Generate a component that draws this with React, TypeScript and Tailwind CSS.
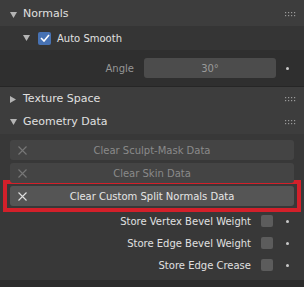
import { ReactNode } from 'react';

const font = { fontFamily: '"DejaVu Sans", "Liberation Sans", sans-serif' };

function Grip() {
  return (
    <svg width="11" height="5" viewBox="0 0 11 5" className="mr-[8px]">
      {[0, 3, 6, 9].map((x) => (
        <g key={x}>
          <rect x={x} y={0} width="1.2" height="1.2" fill="#9a9a9a" />
          <rect x={x} y={3} width="1.2" height="1.2" fill="#9a9a9a" />
        </g>
      ))}
    </svg>
  );
}

function Tri({ open }: { open: boolean }) {
  return open ? (
    <svg width="7" height="6" viewBox="0 0 7 6">
      <path d="M0 0 L7 0 L3.5 6 Z" fill="#b4b4b4" />
    </svg>
  ) : (
    <svg width="6" height="7" viewBox="0 0 6 7">
      <path d="M0 0 L6 3.5 L0 7 Z" fill="#b4b4b4" />
    </svg>
  );
}

function PanelHeader({ title, open, tall }: { title: string; open: boolean; tall?: boolean }) {
  return (
    <div
      className={`bg-[#3d3d3d] flex items-center justify-between ${
        tall ? 'h-[26px] pt-[3px]' : 'h-[24px]'
      }`}
    >
      <div className="flex items-center">
        <div className="w-[23px] flex justify-center pl-[3px]">
          <Tri open={open} />
        </div>
        <span className="text-[11px] text-[#e0e0e0]">{title}</span>
      </div>
      <Grip />
    </div>
  );
}

function Dot() {
  return <div className="w-[3px] h-[3px] rounded-full bg-[#c8c8c8]" />;
}

function ClearButton({ label, active }: { label: string; active?: boolean }) {
  return (
    <div
      className={`h-[20px] rounded-[3px] flex items-center relative ${
        active ? 'bg-[#555555] text-[#e6e6e6]' : 'bg-[#444444] text-[#8a8a8a]'
      }`}
    >
      <svg width="9" height="9" viewBox="0 0 9 9" className="absolute left-[8px]">
        <path d="M0.5 0.5 L8.5 8.5 M8.5 0.5 L0.5 8.5" stroke={active ? '#e0e0e0' : '#777'} strokeWidth="1.1" />
      </svg>
      <span className="flex-1 text-center text-[10px]">{label}</span>
    </div>
  );
}

function CheckRow({ label }: { label: string }) {
  return (
    <div className="h-[22px] flex items-center">
      <span className="w-[251px] text-right text-[10px] text-[#e0e0e0]">{label}</span>
      <div className="w-[12px] h-[12px] rounded-[2px] bg-[#5c5c5c] ml-[10px]" />
      <div className="ml-[13px]">
        <Dot />
      </div>
    </div>
  );
}

function Section({ children }: { children: ReactNode }) {
  return <div>{children}</div>;
}

export default function App() {
  return (
    <div className="w-[304px] h-[287px] bg-[#2c2c2c] overflow-hidden select-none" style={font}>
      <Section>
        <PanelHeader title="Normals" open tall />
        <div className="h-[24px] bg-[#353535] flex items-center">
          <div className="w-[38px] flex justify-end pr-[8px]">
            <Tri open />
          </div>
          <div className="w-[13px] h-[13px] rounded-[2px] bg-[#4772b3] flex items-center justify-center">
            <svg width="10" height="8" viewBox="0 0 10 8">
              <path d="M1 4 L4 7 L9 1" stroke="#ffffff" strokeWidth="1.6" fill="none" />
            </svg>
          </div>
          <span className="ml-[6px] text-[10px] text-[#e0e0e0]">Auto Smooth</span>
        </div>
        <div className="h-[36px] bg-[#2f2f2f] flex items-center">
          <span className="w-[134px] text-right text-[10px] text-[#969696]">Angle</span>
          <div className="ml-[10px] w-[132px] h-[20px] rounded-[3px] bg-[#4c4c4c] flex items-center justify-center text-[10px] text-[#9a9a9a]">
            30°
          </div>
          <div className="ml-[10px]">
            <Dot />
          </div>
        </div>
      </Section>
      <div className="h-[1px] bg-[#262626]" />
      <div className="h-[23px] overflow-hidden">
        <PanelHeader title="Texture Space" open={false} />
      </div>
      <PanelHeader title="Geometry Data" open />
      <div className="h-[146px] bg-[#383838] pt-[6px]">
        <div className="px-[10px] flex flex-col gap-[3px]">
          <ClearButton label="Clear Sculpt-Mask Data" />
          <ClearButton label="Clear Skin Data" />
        </div>
        <div className="mx-[3px] mt-[-3px] border-[4px] border-[#d3202a] px-[3px] py-[2px]">
          <ClearButton label="Clear Custom Split Normals Data" active />
        </div>
        <div className="mt-[-2px]">
          <CheckRow label="Store Vertex Bevel Weight" />
          <CheckRow label="Store Edge Bevel Weight" />
          <CheckRow label="Store Edge Crease" />
        </div>
      </div>
    </div>
  );
}
